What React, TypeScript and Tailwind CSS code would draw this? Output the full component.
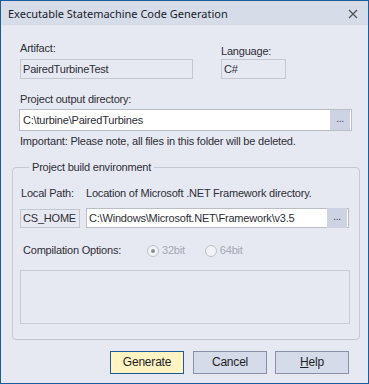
import React from 'react'

const ui = { fontFamily: '"Liberation Sans", Arial, sans-serif' }

function Browse({ className = '' }: { className?: string }) {
  return (
    <div className={`w-[20px] h-[20px] bg-[#cdd3e3] flex items-center justify-center text-[10px] leading-none text-[#3a3a5a] pb-[3px] ${className}`}>
      ...
    </div>
  )
}

function Radio({ label, checked }: { label: string; checked?: boolean }) {
  return (
    <div className="flex items-center gap-[3px] text-[#a3a8b2]">
      <span className="w-[12px] h-[12px] rounded-full border border-[#bcc0c8] bg-[#f2f3f7] flex items-center justify-center">
        {checked && <span className="w-[4px] h-[4px] rounded-full bg-[#8c8f96]" />}
      </span>
      <span>{label}</span>
    </div>
  )
}

function Btn({ children, primary }: { children: React.ReactNode; primary?: boolean }) {
  return (
    <button
      className={`w-[74px] h-[23px] border text-[12px] tracking-[-0.2px] text-[#1e1e2a] flex items-center justify-center ${
        primary ? 'bg-[#fff4c2] border-[#1b5c9c]' : 'bg-[#d5dbe8] border-[#8a91a6]'
      }`}
    >
      {children}
    </button>
  )
}

export default function App() {
  return (
    <div className="w-[369px] h-[384px] bg-[#e6e9f2] border border-[#1b5c9c] flex flex-col text-[11px] leading-[13px] tracking-[-0.2px] text-[#2e2e36]" style={ui}>
      {/* Title bar */}
      <div className="h-[24px] shrink-0 bg-[#d6dce8] flex items-center justify-between pl-[7px] pr-[10px]">
        <span className="text-[11px] tracking-normal text-[#1c1c2c]" style={{ fontFamily: '"Noto Sans", "Open Sans", sans-serif' }}>
          Executable Statemachine Code Generation
        </span>
        <svg width="10" height="10" viewBox="0 0 10 10" className="mt-[1px]">
          <path d="M1 1 L9 9 M9 1 L1 9" stroke="#555" strokeWidth="1.3" />
        </svg>
      </div>

      <div className="flex-1 pl-[11px]">
        {/* Artifact / Language */}
        <div className="flex pl-[8px] pt-[17px]">
          <div className="w-[173px] flex flex-col">
            <span>Artifact:</span>
            <div className="mt-[4px] h-[20px] border border-[#c3c7cf] flex items-center pl-[2px]">PairedTurbineTest</div>
          </div>
          <div className="ml-[28px] w-[65px] flex flex-col">
            <span className="pt-[3px]">Language:</span>
            <div className="mt-[1px] h-[20px] border border-[#c3c7cf] flex items-center pl-[2px]">C#</div>
          </div>
        </div>

        {/* Output directory */}
        <div className="pl-[7px] mt-[14px] flex flex-col">
          <span className="pl-[1px]">Project output directory:</span>
          <div className="mt-[3px] w-[333px] h-[22px] border border-[#b9bdc5] bg-white flex items-center justify-between pl-[3px] pr-[1px]">
            <span>C:\turbine\PairedTurbines</span>
            <Browse />
          </div>
          <span className="pl-[1px] mt-[4px]">Important: Please note, all files in this folder will be deleted.</span>
        </div>

        {/* Build environment */}
        <fieldset className="mt-[13px] w-[348px] border border-[#c4c8d0] rounded-[4px] pl-[7px] pb-[15px]">
          <legend className="ml-[9px] px-[3px]">Project build environment</legend>
          <div className="flex pt-[13px]">
            <span className="pl-[1px] w-[66px]">Local Path:</span>
            <span>Location of Microsoft .NET Framework directory.</span>
          </div>
          <div className="flex items-start mt-[8px]">
            <div className="w-[60px] h-[19px] mt-[1px] border border-[#c3c7cf] flex items-center pl-[2px]">CS_HOME</div>
            <div className="ml-[6px] w-[263px] h-[20px] border border-[#b9bdc5] bg-white flex items-center justify-between pl-[2px] pr-[1px]">
              <span>C:\Windows\Microsoft.NET\Framework\v3.5</span>
              <Browse className="h-[18px]" />
            </div>
          </div>
          <div className="flex items-center mt-[16px] pl-[3px]">
            <span className="w-[124px]">Compilation Options:</span>
            <Radio label="32bit" checked />
            <div className="ml-[20px]">
              <Radio label="64bit" />
            </div>
          </div>
          <div className="mt-[13px] w-[330px] h-[54px] border border-[#c8ccd4]" />
        </fieldset>

        {/* Buttons */}
        <div className="flex mt-[11px] pl-[98px] gap-[8px]">
          <Btn primary>Generate</Btn>
          <div className="ml-[1px]">
            <Btn>Cancel</Btn>
          </div>
          <Btn>
            <span><u>H</u>elp</span>
          </Btn>
        </div>
      </div>
    </div>
  )
}
